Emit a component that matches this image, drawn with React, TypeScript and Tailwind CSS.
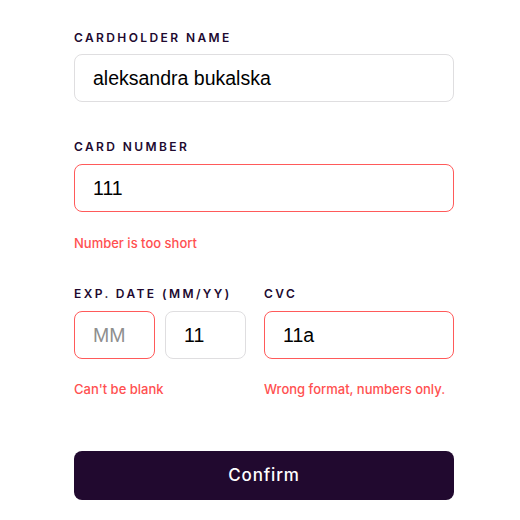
import React from "react";

const label = "block h-4 text-[12px] leading-4 font-semibold tracking-[0.2em] uppercase text-[#21092f] font-['Inter',sans-serif]";
const input = "h-12 w-full rounded-lg border bg-white px-[18px] text-[19.5px] text-black font-['Liberation_Sans',Arial,sans-serif] outline-none placeholder:text-[#8e8e8e]";
const ok = "border-[#dfdee0]";
const bad = "border-[#ff5a5a]";
const err = "h-4 text-[13px] leading-4 font-medium text-[#ff5050] font-['Inter',sans-serif]";

export default function App() {
  return (
    <div className="min-h-[520px] w-[520px] bg-white">
      <form className="ml-[74px] flex w-[380px] flex-col pt-[30px]" onSubmit={(e) => e.preventDefault()}>
        <label className={label}>Cardholder Name</label>
        <input className={`${input} ${ok} mt-[8px]`} defaultValue="aleksandra bukalska" />

        <label className={`${label} mt-[37px]`}>Card Number</label>
        <input className={`${input} ${bad} mt-[9px]`} defaultValue="111" />
        <p className={`${err} mt-[23px]`}>Number is too short</p>

        <div className="mt-[35px] flex gap-[18px]">
          <div className="flex w-[172px] flex-col">
            <label className={label}>Exp. Date (MM/YY)</label>
            <div className="mt-[9px] flex gap-[10px]">
              <input className={`${input} ${bad} w-[81px]`} placeholder="MM" />
              <input className={`${input} ${ok} w-[81px]`} defaultValue="11" />
            </div>
            <p className={`${err} mt-[22px]`}>Can&apos;t be blank</p>
          </div>
          <div className="flex flex-1 flex-col">
            <label className={label}>CVC</label>
            <input className={`${input} ${bad} mt-[9px]`} defaultValue="11a" />
            <p className={`${err} mt-[22px]`}>Wrong format, numbers only.</p>
          </div>
        </div>

        <button type="submit" className="mt-[54px] h-[49px] w-full rounded-lg bg-[#21092f] text-[17px] font-medium tracking-[0.05em] text-white font-['Inter',sans-serif]">
          Confirm
        </button>
      </form>
    </div>
  );
}
